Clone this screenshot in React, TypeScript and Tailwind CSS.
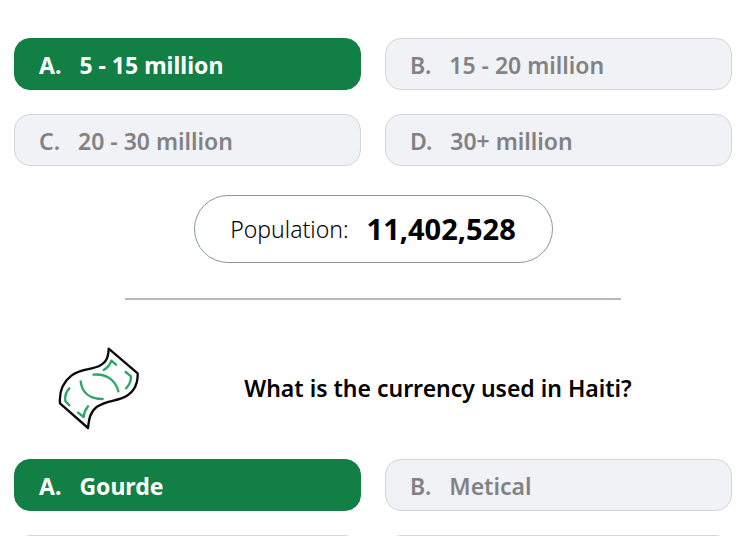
import clsx from "clsx"

type TOption = {
  letter: string
  text?: string
  correct?: boolean
}

const population: TOption[] = [
  { letter: "A", text: "5 - 15 million", correct: true },
  { letter: "B", text: "15 - 20 million" },
  { letter: "C", text: "20 - 30 million" },
  { letter: "D", text: "30+ million" },
]

const currency: TOption[] = [
  { letter: "A", text: "Gourde", correct: true },
  { letter: "B", text: "Metical" },
  { letter: "C" },
  { letter: "D" },
]

export default function App() {
  return (
    <main className="h-screen overflow-hidden bg-white pl-3.5 pr-[18px] pt-[38px] font-['Noto_Sans','Open_Sans',sans-serif] text-black">
      <Options options={population} />

      <div className="mx-auto mt-[29px] flex h-[68px] w-1/2 items-center justify-center gap-[18px] rounded-full border border-[#8b96a3]">
        <span className="text-[23px] font-light">Population:</span>
        <strong className="text-[29px] font-bold">11,402,528</strong>
      </div>

      <hr className="mx-auto mt-[35px] w-[69%] border-t-2 border-[#b4bbbd]" />

      <div className="mt-[47px] flex items-center gap-1 pl-11">
        <Banknote />
        <h2 className="flex-1 text-center text-[23px] font-semibold">
          What is the currency used in Haiti?
        </h2>
      </div>

      <div className="mt-[29px]">
        <Options options={currency} />
      </div>
    </main>
  )
}

function Options(props: { options: TOption[] }) {
  return <div className="grid grid-cols-2 gap-6">
    {props.options.map(o => (
      <button
        key={o.letter}
        type="button"
        aria-label={o.text ? undefined : o.letter}
        className={clsx(
          "flex h-[52px] items-center gap-[18px] rounded-2xl border px-6 pt-0.5 text-[23px]",
          o.correct
            ? "border-[#128044] bg-[#128044] font-bold text-white"
            : "border-[#d3d5d9] bg-[#f1f2f5] font-semibold text-[#828284]"
        )}
      >
        {o.text && <>
          <span>{o.letter}.</span>
          <span>{o.text}</span>
        </>}
      </button>
    ))}
  </div>
}

function Banknote() {
  return <svg className="h-[83px] w-[82px] flex-none" viewBox="54 36 246 249" fill="none" strokeLinecap="round" strokeLinejoin="round" aria-hidden="true">
    {/* outline */}
    <path
      d="M206 41 L293 115 C294 151 277 178 244 190 C218 199 193 200 171 215 C149 232 147 254 144 279 L60 205 C57 170 69 142 94 122 C119 101 151 105 178 93 C201 81 205 65 206 41 Z"
      stroke="#0d090b"
      strokeWidth="7"
    />
    {/* centre arcs and corner marks */}
    <g stroke="#2ba568" strokeWidth="7">
      <path d="M160 119 C199 115 227 136 235 169" />
      <path d="M122 139 C126 174 151 192 188 192" />
      <path d="M191 105 C203 98 210 91 214 77 L228 89" />
      <path d="M257 111 L273 124 C273 140 268 151 258 160" />
      <path d="M88 160 C78 170 74 181 76 198 L88 211" />
      <path d="M114 233 L131 246 C132 233 136 224 144 214" />
    </g>
  </svg>
}
